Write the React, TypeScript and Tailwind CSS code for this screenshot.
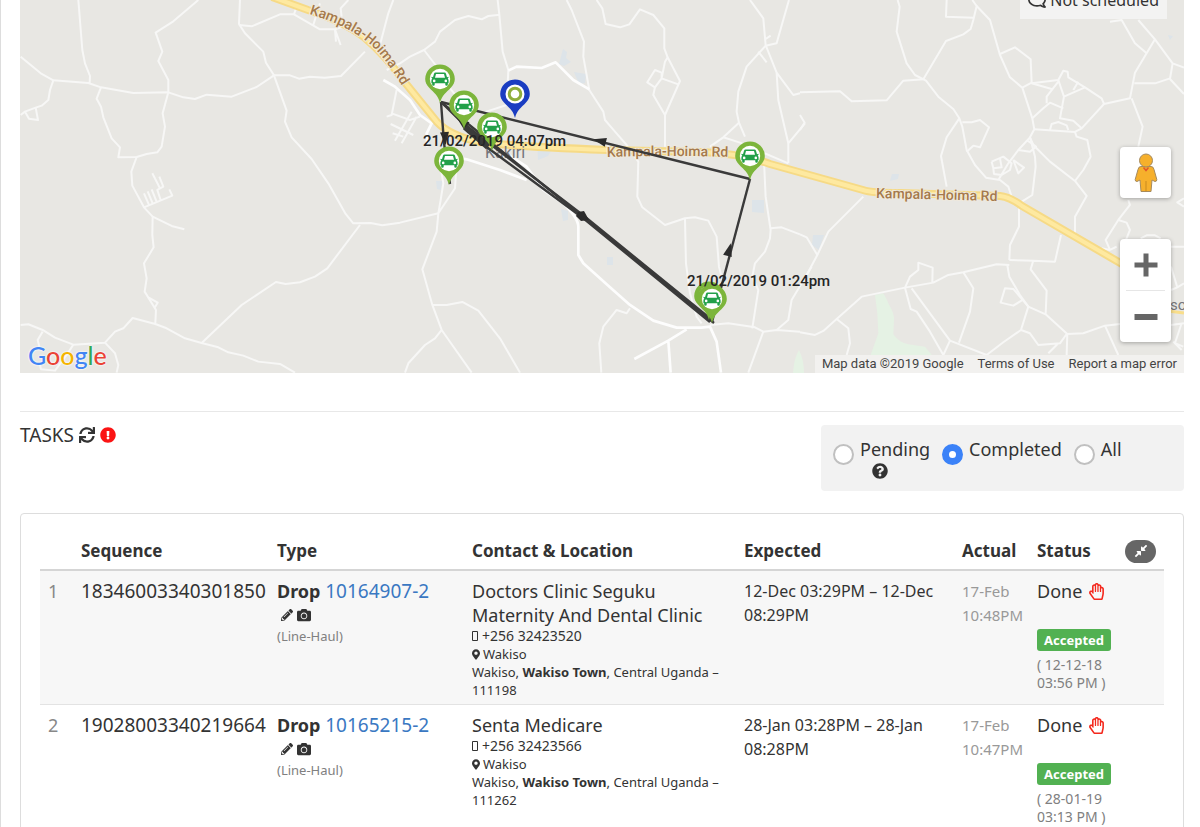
import type { ReactNode } from "react";
import {
  FaCamera,
  FaCompressAlt,
  FaExclamationCircle,
  FaMapMarkerAlt,
  FaPencilAlt,
  FaQuestionCircle,
  FaRegComment,
  FaRegHandPaper,
  FaSync,
} from "react-icons/fa";

type Task = {
  index: number;
  sequence: string;
  order: string;
  contact: string;
  phone: string;
  postcode: string;
  expected: string;
  actual: string;
  acceptedDate: string;
  acceptedTime: string;
};

const tasks: Task[] = [
  {
    index: 1,
    sequence: "18346003340301850",
    order: "10164907-2",
    contact: "Doctors Clinic Seguku Maternity And Dental Clinic",
    phone: "+256 32423520",
    postcode: "111198",
    expected: "12-Dec 03:29PM – 12-Dec 08:29PM",
    actual: "17-Feb 10:48PM",
    acceptedDate: "12-12-18",
    acceptedTime: "03:56 PM",
  },
  {
    index: 2,
    sequence: "19028003340219664",
    order: "10165215-2",
    contact: "Senta Medicare",
    phone: "+256 32423566",
    postcode: "111262",
    expected: "28-Jan 03:28PM – 28-Jan 08:28PM",
    actual: "17-Feb 10:47PM",
    acceptedDate: "28-01-19",
    acceptedTime: "03:13 PM",
  },
];

const westRoads = [
  "M62 170L125 222L160 241L265 249L303 262L400 279L505 277L550 292L585 297L620 284L695 290L770 261L822 226L870 226L897 236L930 230L975 233L1023 228L1095 155",
  "M235 0L247 150L255 190L270 228L269 249",
  "M160 241L150 270L145 300L125 317L107 323L75 335L62 345M75 335L87 356L114 360L107 323",
  "M303 262L290 296L303 320L310 352L335 415L360 442L355 472L410 471L440 462L472 457L485 440L495 380L488 340L505 277L505 240L475 183L487 155L467 98L520 64L595 0",
  "M410 471L394 515L397 557L432 622L458 650L515 678L553 688M458 650L457 705L461 742L432 790L440 835L434 875L468 930L466 970M445 892L473 908L463 925",
  "M432 622L517 587L508 568M447 615L432 580M458 610L443 574M470 606L455 568M482 600L472 570L490 560L478 530M480 565L457 520",
  "M62 975L85 973L128 990L165 1013L220 1034L315 1028L345 995L370 985L398 954L466 972L500 985L555 1015L605 1029L655 1042L685 1057L730 1067L775 1085L840 1092L885 1118",
  "M315 1028L345 1060L355 1095L350 1118M128 995L113 1020L118 1040M220 1034L200 1065L165 1112L123 1108L120 1095",
  "M605 1029L725 915L828 846L857 852L900 847L945 830L982 805L1080 675",
  "M720 0L717 72L735 100L790 155L798 188L822 226L860 332L855 365L875 412L935 477L985 550L1037 642L1060 670L1112 669L1147 676L1200 668L1315 640",
  "M717 75L755 79L840 43L882 43L960 88L1005 88L1030 80M882 43L890 20M1022 135L1005 88L1008 125M960 10L940 75M1045 0L1022 25L1025 50M1180 0L1165 40L1140 135",
  "M1190 270L1175 345L1160 350M1175 340L1230 360L1260 350M1172 372L1240 405M1178 400L1210 410M1185 422L1235 335M1205 430L1250 350",
];

const centralRoads = [
  "M-40 210L0 190L30 170L72 150L105 125L120 95L165 60L205 48L245 58L265 48L300 44M293 0L298 44L308 155L325 210L320 315L250 338",
  "M72 150L118 210M130 240L170 290",
  "M500 0L515 30L552 125L550 170L568 270L610 335L615 360L645 395L680 435L715 485L712 590L727 622L795 675L855 655L885 652L925 662L950 710L957 800L970 850",
  "M855 655L858 790L870 880L890 950L905 970",
  "M590 0L607 25L617 72L660 82L688 73L720 28L760 45L793 85L793 145L803 172L840 243L795 345L760 285L765 262L742 247L765 210L785 218L785 235L765 262M785 235L835 253M803 172L795 185L785 235M795 345L795 440",
  "M1050 0L1090 55L1097 135L1130 218L1180 285L1200 280M1167 0L1147 70L1130 130L1097 137L1040 200L1015 275L1010 335L1017 368L970 412L930 440M1075 155L1100 187M1130 218L1135 300L1165 430L1165 490M1215 370L1165 430M1097 117L1112 107",
  "M1017 368L1035 410M970 412L1020 428L1165 490",
  "M1092 480L1097 590L1112 690L1110 715L1095 755L1065 790L1057 830L1075 870L1057 985M1112 685L1145 682L1200 703M1090 995L1045 1118",
  "M1235 800L1175 900L1165 960L1130 990",
  "M170 490L165 565L115 640L110 695L67 808L97 915L125 990L215 1118M97 915L140 915L187 906L235 932L300 1015L360 1118M125 990L105 1015L75 1035L25 1090L15 1118M115 640L122 600L130 550L118 480",
  "M690 925L680 940L650 930L610 980L598 1030L604 1118M930 975L985 970L1065 982L1090 995L1130 990L1200 995",
];

const centralStreets = [
  "M-50 240L-15 260L30 300L60 345L95 370L80 400L82 440",
  "M325 212L350 200L425 204L467 187L520 240L568 268",
  "M155 470L200 478L300 510L380 540",
  "M310 455L380 500L430 570L490 610Q535 655 535 680L535 765L550 790L630 862L690 915L760 962L830 983L905 983L930 980L950 1025L963 1118",
  "M860 988L805 1022L812 1118M805 1022L703 1077",
];

const eastRoads = [
  "M0 277L120 274L155 304L260 301L310 242L370 238L438 123L490 103L512 87L520 60L530 18L517 0M440 0L438 50L520 53",
  "M293 0L299 20L290 95L320 190L345 225L378 242L415 290L460 327L478 355L487 380L500 450L525 495L558 533L600 540L625 560L635 590",
  "M478 355L440 412L423 468L440 560M487 367L515 367L540 360L567 382L540 442L520 437L500 455",
  "M0 345L14 368L0 390",
  "M530 18L570 60L600 165L630 232L667 263L697 355L703 388L690 412L700 435L750 485L825 543L860 588L825 650L825 700",
  "M600 162L645 142L692 178L695 248L667 263M695 250L775 240L790 212L803 215L805 232L855 262L905 295L912 312L990 295L1005 218L1065 118L1015 60",
  "M703 388L825 396L845 385L912 312M845 385L820 362L780 355L792 290L775 240M792 290L855 262M820 270L835 245M740 310L740 290L775 245M695 250L755 267M697 355L730 325L750 308L790 325M750 390L755 372L775 366L800 376L805 390",
  "M825 396L830 410L862 420L872 470L850 510L825 543",
  "M690 412L655 450L625 490L595 540M655 450L690 455L708 440L680 420M575 485L610 470L635 490L630 510L605 525L582 522L580 505L605 502L600 475M580 505L575 485M640 480L672 503L655 520L640 480M690 412L705 470L707 500L697 585L657 610L657 680L630 735L628 780",
  "M930 65L965 60L1005 130L1040 160M1065 118L1118 190L1152 203M1118 190L1110 237L1152 282M1003 250L1065 250L1110 235M995 295L1028 380L1015 440",
  "M985 600L990 615L955 660L917 720L930 750M955 660L980 668L990 690L978 720M1152 595L1132 607L1152 620M1022 715L1040 706L1065 706L1082 715M905 745L930 750L950 740",
  "M190 590L85 695L52 765L20 825M0 703L20 712L52 765",
  "M0 997L45 1005L70 993L110 957L185 890L315 863L400 848L445 825L490 817L590 793L628 795M315 863L330 830L355 810L355 788L398 803L397 848",
  "M315 863L332 927L350 935L390 995L430 1065L450 1022L335 865M450 1022L560 1065L610 1027L663 990L685 920L668 900L640 917L602 908L615 865L640 867L668 900M490 817L520 865L510 935L477 1028",
  "M628 780L700 782L765 785L783 705M700 782L692 808L740 872L737 943M622 795L628 830L660 885L685 920L737 943L802 1002L800 1065M802 1002L850 1000L915 977L960 972M915 977L955 1065M663 990L690 1000L715 1035L780 1030L800 1002M745 1060L775 1030",
  "M110 957L145 985L150 1030L140 1065M1113 740L1152 740M1113 800L1132 862L1152 850M1113 870L1132 862M1113 975L1152 970M1120 1025L1145 1050M1145 970L1125 1030L1150 1040",
];

const carPins: [number, number][] = [
  [440, 79],
  [464, 105],
  [492, 127],
  [449, 161],
  [750, 156],
  [709, 296],
  [712, 299],
];

function PinBody({ x, y, className }: { x: number; y: number; className: string }) {
  return (
    <path
      className={className}
      transform={`translate(${x} ${y})`}
      d="M0 24C-2 16 -6 14 -11 8.500C-13.500 5.800 -14.800 3.200 -14.800 0A14.800 14.600 0 0 1 14.800 0C14.800 3.200 13.500 5.800 11 8.500C6 14 2 16 0 24Z"
    />
  );
}

function CarPin({ x, y }: { x: number; y: number }) {
  return (
    <g>
      <PinBody x={x} y={y} className="fill-[#7cb53b]" />
      <g transform={`translate(${x} ${y})`}>
        <circle r="10.200" className="fill-white" />
        <path
          fillRule="evenodd"
          className="fill-[#22a049]"
          d="M-4.500 -6.500H4.500Q5.600 -6.500 6 -5.300L7 -1.800L8.300 -2.200L8.600 -1.200L7.700 -.6Q8.600 .2 8.600 1.500V4.200H7.800V5.800Q7.800 6.800 6.600 6.800Q5.300 6.800 5.300 5.800V4.200H-5.300V5.800Q-5.300 6.800 -6.600 6.800Q-7.800 6.800 -7.800 5.800V4.200H-8.600V1.500Q-8.600 .2 -7.700 -.6L-8.600 -1.200L-8.300 -2.200L-7 -1.800L-6 -5.300Q-5.600 -6.500 -4.500 -6.500ZM-4 -5L-5 -1.300H5L4 -5ZM-5.800 .6A1.300 1.300 0 1 0 -5.800 3.200A1.300 1.300 0 1 0 -5.800 .6ZM5.800 .6A1.300 1.300 0 1 0 5.800 3.200A1.300 1.300 0 1 0 5.800 .6Z"
        />
      </g>
    </g>
  );
}

function Arrow({ x, y, angle }: { x: number; y: number; angle: number }) {
  return <path d="M7 0L-6 -4.500L-6 4.500Z" className="fill-[#2b2b2b]" transform={`translate(${x} ${y}) rotate(${angle})`} />;
}

const highway = "M272 -3L308 10Q345 22 365 38Q385 55 403 80L437 122Q450 136 480 142Q505 146 607 150L700 152Q740 153 770 164L863 190Q872 193 900 193L1000 196Q1010 197 1022 206L1122 264";

function RouteMap() {
  return (
    <svg
      viewBox="20 0 1164 373"
      preserveAspectRatio="xMinYMin slice"
      className="block h-full w-full bg-[#e8e7e3]"
      role="img"
      aria-label="Route map around Kakiri"
    >
      <g className="fill-[#e5f2e4]">
        <path transform="translate(800 0) scale(.3333)" d="M225 885L250 880Q262 900 265 910Q285 945 282 960L280 1003Q300 1030 325 1033L375 1040L400 1070L425 1118H200L212 1065L235 1000L232 940Z" />
        <path d="M799 350Q804 360 804 373H793Q794 358 799 350Z" />
      </g>
      <g className="fill-[#dde4e9]">
        <path d="M563 49L567 52L566 58L571 62L564 66L559 64ZM574 72L586 74L585 83L579 84ZM752 200L764 200L764 213L752 212ZM561 209L568 211L568 220L563 221ZM607 257L613 257L613 265L607 265ZM537 140L553 148L548 156L538 160ZM892 174L899 174L898 179L890 181ZM813 235L824 235L819 250L812 245ZM436 181L442 181L441 190L437 189ZM1168 35L1173 36L1170 40Z" />
      </g>
      <g className="fill-none stroke-[#f7f7f6] [stroke-linejoin:round]">
        <g transform="scale(.3333)" strokeWidth="6">
          {westRoads.map((d) => (
            <path key={d} d={d} />
          ))}
        </g>
        <g transform="translate(400 0) scale(.3333)" strokeWidth="6">
          {centralRoads.map((d) => (
            <path key={d} d={d} />
          ))}
          {centralStreets.map((d) => (
            <path key={d} d={d} className="stroke-[#fdfdfd]" strokeWidth="8" />
          ))}
        </g>
        <g transform="translate(800 0) scale(.3333)" strokeWidth="6">
          {eastRoads.map((d) => (
            <path key={d} d={d} />
          ))}
        </g>
      </g>
      <path d={highway} className="fill-none stroke-[#f6da86]" strokeWidth="8" />
      <path d={highway} className="fill-none stroke-[#fee9a0]" strokeWidth="4" />
      <path d="M1160 310L1184 313" className="fill-none stroke-[#f9de8b]" strokeWidth="3" />

      <defs>
        <path id="road-west" d="M309 14Q350 26 372 46Q386 59 406 92" />
        <path id="road-middle" d="M607 157Q665 155 735 157" />
        <path id="road-east" d="M876 198L1004 201" />
      </defs>
      <g className="fill-[#a5794a] stroke-[#efe9dd] font-['Roboto'] text-[14px] font-medium [paint-order:stroke]" strokeWidth="2">
        <text>
          <textPath href="#road-west">Kampala-Hoima Rd</textPath>
        </text>
        <text>
          <textPath href="#road-middle">Kampala-Hoima Rd</textPath>
        </text>
        <text>
          <textPath href="#road-east">Kampala-Hoima Rd</textPath>
        </text>
      </g>
      <text x="485" y="158" className="fill-[#75757a] font-['Roboto'] text-[16px]">
        Kakiri
      </text>
      <text x="1170" y="310" className="fill-[#75757a] font-['Roboto'] text-[15px]">
        so
      </text>

      <g className="fill-none stroke-[#3a3a3a]" strokeWidth="2.400">
        <path d="M441 102L444 143L450 184" />
        <path d="M441 102L750 179" />
        <path d="M750 179L712 322" />
        <path d="M441 102L583 217L714 323" />
        <path d="M441 102L488 148L583 218L710 322" />
        <path d="M464 124L584 216L712 320" />
        <path d="M465 127L488 147" strokeWidth="6" />
      </g>
      <Arrow x={600} y={141} angle={194} />
      <Arrow x={729} y={250} angle={-75} />
      <Arrow x={445} y={138} angle={85} />
      <path d="M578 212L584 211L589 220L581 221L576 216Z" className="fill-[#2b2b2b]" />
      <Arrow x={462} y={122} angle={219} />

      {carPins.map(([x, y]) => (
        <CarPin key={`${x}-${y}`} x={x} y={y} />
      ))}
      <g>
        <PinBody x={515} y={94} className="fill-[#1a3dc1]" />
        <circle cx="515" cy="94" r="9.500" className="fill-white" />
        <circle cx="515" cy="94" r="5.800" className="fill-white stroke-[#8fae3c]" strokeWidth="3" />
      </g>
      <g className="fill-[#252525] font-['Roboto'] text-[15px] font-medium">
        <text x="423" y="146">21/02/2019 04:07pm</text>
        <text x="687" y="286">21/02/2019 01:24pm</text>
      </g>
    </svg>
  );
}

function Pegman() {
  return (
    <svg viewBox="0 0 24 40" className="h-10 w-6" aria-hidden="true">
      <g className="fill-[#f6b02c] stroke-[#a58a5e]" strokeWidth="1">
        <path d="M7 13.500Q4.500 13.500 4 16.500L1.200 26.500Q1 28.500 3 28.500L6 27L7 38.500H17L18 27L21 28.500Q23 28.500 22.800 26.500L20 16.500Q19.500 13.500 17 13.500Z" />
        <circle cx="12" cy="7.500" r="6.500" />
      </g>
      <path d="M9.500 14.500L12 17.500L14.500 14.500" className="fill-none stroke-[#e2572b]" strokeWidth="1.500" />
      <path d="M12 28V38.500" className="stroke-[#c98a1e]" strokeWidth="1" />
    </svg>
  );
}

function MapPanel() {
  return (
    <section className="relative h-[373px] overflow-hidden" aria-label="Map">
      <RouteMap />
      <div className="absolute -top-5 right-[17px] flex h-[39px] items-center gap-1 bg-[#f3f3f2] px-2 text-[16px] leading-6">
        <FaRegComment className="size-[18px] -scale-x-100" aria-hidden="true" />
        Not scheduled
      </div>
      <button
        type="button"
        aria-label="Street View"
        className="absolute top-[147px] right-[13px] flex size-[51px] items-center justify-center rounded-sm bg-white shadow-[0_1px_4px_rgba(0,0,0,0.3)]"
      >
        <Pegman />
      </button>
      <div className="absolute top-[239px] right-[13px] flex w-[51px] flex-col rounded-sm bg-white px-[6px] shadow-[0_1px_4px_rgba(0,0,0,0.3)]">
        <button type="button" aria-label="Zoom in" className="flex h-[51px] items-center justify-center">
          <svg viewBox="0 0 24 24" className="size-6 stroke-[#666]" strokeWidth="5" aria-hidden="true">
            <path d="M.5 12H23.500M12 .5V23.500" />
          </svg>
        </button>
        <button type="button" aria-label="Zoom out" className="flex h-[52px] items-center justify-center border-t border-[#e6e6e6]">
          <svg viewBox="0 0 24 24" className="size-6 stroke-[#666]" strokeWidth="6" aria-hidden="true">
            <path d="M.5 12H23.500" />
          </svg>
        </button>
      </div>
      <a
        href="#google"
        className="absolute bottom-0 left-2 font-['Lato'] text-[25px] leading-9 font-medium [text-shadow:0_0_2px_#fff,0_0_2px_#fff]"
      >
        <span className="text-[#4285f4]">G</span>
        <span className="text-[#ea4335]">o</span>
        <span className="text-[#f4b400]">o</span>
        <span className="text-[#4285f4]">g</span>
        <span className="text-[#34a853]">l</span>
        <span className="text-[#ea4335]">e</span>
      </a>
      <div className="absolute right-0 bottom-0 flex bg-[#f2f1ef] font-['Roboto'] text-[13px] leading-[18px] text-[#444]">
        <span className="px-[7px]">Map data ©2019 Google</span>
        <a href="#terms" className="px-[7px]">
          Terms of Use
        </a>
        <a href="#report" className="px-[7px]">
          Report a map error
        </a>
      </div>
    </section>
  );
}

function FilterOption({ label, checked, children }: { label: string; checked?: boolean; children?: ReactNode }) {
  return (
    <label className="flex items-start gap-[6px]">
      <input
        type="radio"
        name="task-filter"
        defaultChecked={checked}
        className="mt-[7px] size-[21px] shrink-0 appearance-none rounded-full border-2 border-[#c0c0c0] bg-white checked:border-[7px] checked:border-[#3b82f8]"
      />
      <span className="flex flex-col">
        {label}
        {children}
      </span>
    </label>
  );
}

function TaskRow({ task }: { task: Task }) {
  return (
    <tr className="border-t border-[#e3e3e3] align-top first:border-t-0 odd:bg-[#f7f7f7] [&>td]:px-2 [&>td]:pt-2 [&>td]:pb-[5px]">
      <td className="text-[#888]">{task.index}</td>
      <td className="text-[19px]">{task.sequence}</td>
      <td>
        <div className="whitespace-nowrap">
          <b>Drop</b>{" "}
          <a href={`#${task.order}`} className="text-[19px] text-[#3a78c2]">
            {task.order}
          </a>
        </div>
        <div className="flex h-6 items-center gap-1 pl-1">
          <button type="button" aria-label="Edit task">
            <FaPencilAlt className="size-3" />
          </button>
          <button type="button" aria-label="Task photos">
            <FaCamera className="size-[14px]" />
          </button>
        </div>
        <div className="text-[13px] leading-[18px] text-[#808080]">(Line-Haul)</div>
      </td>
      <td>
        {task.contact}
        <div className="text-[13px] leading-[18px]">
          <div className="flex items-center gap-1 text-[14px]">
            <svg viewBox="0 0 6 10" className="h-[10px] w-[6px]" aria-hidden="true">
              <path d="M.5 .5H5.500V9.500H.5Z" className="fill-none stroke-[#333]" />
            </svg>
            {task.phone}
          </div>
          <div className="flex items-center gap-[3px]">
            <FaMapMarkerAlt className="h-[11px] w-2" aria-hidden="true" />
            Wakiso
          </div>
          <div>
            Wakiso, <b>Wakiso Town</b>, Central Uganda – {task.postcode}
          </div>
        </div>
      </td>
      <td className="text-[16px]">{task.expected}</td>
      <td className="text-[15px] text-[#999]">{task.actual}</td>
      <td colSpan={2}>
        <div className="flex items-center gap-[6px]">
          Done <FaRegHandPaper className="size-[17px] text-[#f4281d]" aria-label="Held" />
        </div>
        <div className="mt-[26px] mb-[5px] w-fit rounded-[3px] bg-[#52b152] px-[7px] text-[13px] leading-[22px] font-bold text-white">
          Accepted
        </div>
        <div className="text-[14px] leading-[18px] text-[#808080]">
          ( {task.acceptedDate}
          <br />
          {task.acceptedTime} )
        </div>
      </td>
    </tr>
  );
}

export default function App() {
  return (
    <main className="h-screen overflow-hidden border-l border-[#ddd] bg-white pr-4 pl-[19px] font-['Noto_Sans',sans-serif] text-[18px] leading-6 text-[#333]">
      <MapPanel />

      <header className="mt-[38px] flex items-start justify-between border-t border-[#e8e8e8] pt-[13px]">
        <h2 className="flex items-center gap-[5px] text-[19px] leading-5">
          TASKS
          <button type="button" aria-label="Refresh tasks">
            <FaSync className="size-4" />
          </button>
          <FaExclamationCircle className="size-4 text-[#fb1414]" aria-label="Attention needed" />
        </h2>
        <fieldset className="flex w-[363px] gap-3 rounded-[4px] bg-[#f2f2f2] px-3 py-3">
          <FilterOption label="Pending">
            <FaQuestionCircle className="mt-[2px] ml-3 size-4" aria-hidden="true" />
          </FilterOption>
          <FilterOption label="Completed" checked />
          <FilterOption label="All" />
        </fieldset>
      </header>

      <section className="mt-[22px] rounded-[4px] border border-[#ddd] p-[19px]" aria-label="Tasks">
        <table className="w-full table-fixed border-collapse">
          <colgroup>
            <col className="w-[33px]" />
            <col className="w-[196px]" />
            <col className="w-[195px]" />
            <col />
            <col className="w-[218px]" />
            <col className="w-[75px]" />
            <col className="w-[88px]" />
            <col className="w-[47px]" />
          </colgroup>
          <thead>
            <tr className="border-b-2 border-[#d5d5d5] text-left text-[17px] [&>th]:px-2 [&>th]:py-[6px]">
              <th aria-label="Number" />
              <th>Sequence</th>
              <th>Type</th>
              <th>Contact &amp; Location</th>
              <th>Expected</th>
              <th>Actual</th>
              <th>Status</th>
              <th>
                <button
                  type="button"
                  aria-label="Collapse tasks"
                  className="flex h-[23px] w-[31px] items-center justify-center rounded-full bg-[#666] text-white"
                >
                  <FaCompressAlt className="size-[14px]" />
                </button>
              </th>
            </tr>
          </thead>
          <tbody>
            {tasks.map((task) => (
              <TaskRow key={task.index} task={task} />
            ))}
          </tbody>
        </table>
      </section>
    </main>
  );
}
